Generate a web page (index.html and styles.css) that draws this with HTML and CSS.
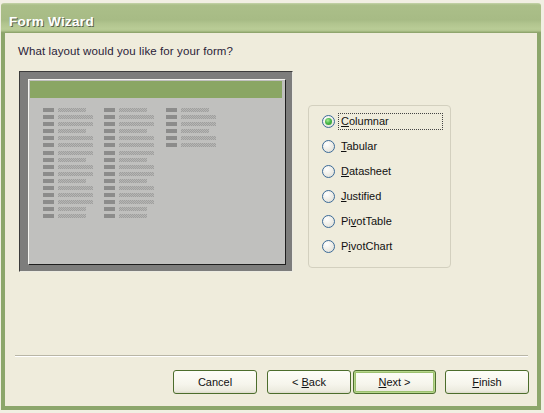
FILE: index.html
```html
<!DOCTYPE html>
<html>
<head>
<meta charset="utf-8">
<link rel="stylesheet" href="styles.css">
</head>
<body>
<div class="window">
  <div class="titlebar"><span class="title">Form Wizard</span></div>
  <div class="frame">
    <div class="question">What layout would you like for your form?</div>
    <div class="main">
      <div class="preview">
        <div class="panel">
          <div class="header"></div>
          <div class="cols">
            <div class="col">
              <div class="r"><i class="k"></i><i class="v s"></i></div>
              <div class="r"><i class="k"></i><i class="v"></i></div>
              <div class="r"><i class="k"></i><i class="v"></i></div>
              <div class="r"><i class="k"></i><i class="v s"></i></div>
              <div class="r"><i class="k"></i><i class="v"></i></div>
              <div class="r"><i class="k"></i><i class="v"></i></div>
              <div class="r"><i class="k"></i><i class="v"></i></div>
              <div class="r"><i class="k"></i><i class="v s"></i></div>
              <div class="r"><i class="k"></i><i class="v"></i></div>
              <div class="r"><i class="k"></i><i class="v"></i></div>
              <div class="r"><i class="k"></i><i class="v s"></i></div>
              <div class="r"><i class="k"></i><i class="v"></i></div>
              <div class="r"><i class="k"></i><i class="v"></i></div>
              <div class="r"><i class="k"></i><i class="v"></i></div>
              <div class="r"><i class="k"></i><i class="v s"></i></div>
              <div class="r"><i class="k"></i><i class="v s"></i></div>
            </div>
            <div class="col">
              <div class="r"><i class="k"></i><i class="v s"></i></div>
              <div class="r"><i class="k"></i><i class="v"></i></div>
              <div class="r"><i class="k"></i><i class="v"></i></div>
              <div class="r"><i class="k"></i><i class="v s"></i></div>
              <div class="r"><i class="k"></i><i class="v"></i></div>
              <div class="r"><i class="k"></i><i class="v"></i></div>
              <div class="r"><i class="k"></i><i class="v"></i></div>
              <div class="r"><i class="k"></i><i class="v s"></i></div>
              <div class="r"><i class="k"></i><i class="v"></i></div>
              <div class="r"><i class="k"></i><i class="v"></i></div>
              <div class="r"><i class="k"></i><i class="v s"></i></div>
              <div class="r"><i class="k"></i><i class="v"></i></div>
              <div class="r"><i class="k"></i><i class="v"></i></div>
              <div class="r"><i class="k"></i><i class="v"></i></div>
              <div class="r"><i class="k"></i><i class="v s"></i></div>
              <div class="r"><i class="k"></i><i class="v s"></i></div>
            </div>
            <div class="col">
              <div class="r"><i class="k"></i><i class="v s"></i></div>
              <div class="r"><i class="k"></i><i class="v"></i></div>
              <div class="r"><i class="k"></i><i class="v"></i></div>
              <div class="r"><i class="k"></i><i class="v s"></i></div>
              <div class="r"><i class="k"></i><i class="v"></i></div>
              <div class="r"><i class="k"></i><i class="v"></i></div>
            </div>
          </div>
        </div>
      </div>
      <div class="group">
        <div class="opt"><span class="radio checked"></span><span class="lbl focus"><u>C</u>olumnar</span></div>
        <div class="opt"><span class="radio"></span><span class="lbl"><u>T</u>abular</span></div>
        <div class="opt"><span class="radio"></span><span class="lbl"><u>D</u>atasheet</span></div>
        <div class="opt"><span class="radio"></span><span class="lbl"><u>J</u>ustified</span></div>
        <div class="opt"><span class="radio"></span><span class="lbl">Pi<u>v</u>otTable</span></div>
        <div class="opt"><span class="radio"></span><span class="lbl">P<u>i</u>votChart</span></div>
      </div>
    </div>
    <div class="sep"></div>
    <div class="buttons">
      <div class="btn cancel"><span>Cancel</span></div>
      <div class="btn back"><span>&lt;&nbsp;<u>B</u>ack</span></div>
      <div class="btn next default"><span><u>N</u>ext &gt;</span></div>
      <div class="btn finish"><span><u>F</u>inish</span></div>
    </div>
  </div>
</div>
</body>
</html>
```

FILE: styles.css
```css
* { box-sizing: border-box; }
html, body { margin: 0; padding: 0; }
body {
  background: #f1efe3;
  width: 544px;
  height: 413px;
  overflow: hidden;
  font-family: "Liberation Sans", Arial, sans-serif;
  font-size: 11px;
}
.window {
  margin: 3px 0 0 1px;
  width: 540px;
  height: 407px;
  display: flex;
  flex-direction: column;
}
.titlebar {
  height: 30px;
  border-radius: 3px 3px 0 0;
  background: linear-gradient(to bottom, #c6d4aa 0, #abbf89 2px, #a7bb85 17px, #b2c58f 21px, #b9cc96 26px, #b0c48d 28px, #94aa72 29px, #8aa168 30px);
  display: flex;
  align-items: center;
  padding-left: 8px;
}
.title {
  color: #ffffff;
  font-weight: bold;
  font-size: 13.5px;
  letter-spacing: 0.3px;
  text-shadow: 1px 1px 0 #5b6450;
  margin-top: 6px;
}
.frame {
  height: 377px;
  border: 4px solid #8ca66b;
  border-top: none;
  background: #efecdc;
  display: flex;
  flex-direction: column;
}
.question {
  margin: 11px 0 0 13px;
  line-height: 14px;
  font-size: 11.5px;
  letter-spacing: 0.1px;
  color: #2a2238;
}
.main {
  display: flex;
  margin: 13px 0 0 14px;
  align-items: flex-start;
}
.preview {
  width: 274px;
  height: 201px;
  background: #7d7d7c;
  border: 1px solid;
  border-color: #3c3c3c #ecebe2 #ecebe2 #3c3c3c;
  padding: 7px 6px 6px 8px;
}
.panel {
  width: 258px;
  height: 186px;
  background: #c0c0be;
  border: 1px solid;
  border-color: #f4f4f0 #1e1e1e #1e1e1e #f4f4f0;
}
.header {
  margin: 1px 3px 0 1px;
  height: 17px;
  background: #8aa664;
}
.cols {
  margin-top: 10px;
  padding-left: 14px;
  display: grid;
  grid-template-columns: 61px 62px 60px;
}
.col { display: flex; flex-direction: column; }
.r {
  height: 7.1px;
  display: flex;
  align-items: flex-start;
}
.k {
  display: block;
  width: 11px;
  height: 4px;
  background: #8c8c8b;
}
.v {
  display: block;
  width: 35px;
  height: 4px;
  margin-left: 4px;
  background-color: #aaaaa9;
  background-image: repeating-conic-gradient(#9f9f9e 0 25%, #b6b6b4 0 50%);
  background-size: 2px 2px;
}
.v.s { width: 28px; }
.group {
  margin: 34px 0 0 15px;
  width: 143px;
  height: 163px;
  border: 1px solid #d3d0bf;
  border-radius: 4px;
  padding: 7px 0 0 13px;
}
.opt {
  height: 17px;
  margin-bottom: 8px;
  display: flex;
  align-items: center;
}
.radio {
  width: 13px;
  height: 13px;
  border-radius: 50%;
  border: 1px solid #3a6a98;
  background: radial-gradient(circle at 35% 30%, #ffffff 0, #f4f3ee 35%, #dcdbd2 100%);
  display: flex;
  align-items: center;
  justify-content: center;
  flex: none;
}
.radio.checked::after {
  content: "";
  width: 7px;
  height: 7px;
  border-radius: 50%;
  background: radial-gradient(circle at 40% 35%, #a8ec98 0, #4cb84a 45%, #23922a 100%);
}
.lbl {
  margin-left: 3px;
  padding-left: 3px;
  line-height: 17px;
  height: 17px;
  color: #111;
}
.focus {
  width: 105px;
  outline: 1px dotted #444;
  outline-offset: -1px;
}
.sep {
  margin: 83px 0 0 10px;
  width: 513px;
  height: 2px;
  border-top: 1px solid #b9b6a6;
  border-bottom: 1px solid #ffffff;
}
.buttons {
  margin-top: 13px;
  display: flex;
  justify-content: flex-end;
  padding-right: 8px;
}
.btn {
  width: 84px;
  height: 24px;
  border: 1px solid #4c6d2c;
  border-radius: 3px;
  background: linear-gradient(to bottom, #fdfdf8 0, #f6f5ec 60%, #ecebdf 90%, #dcdacb 100%);
  display: flex;
  align-items: center;
  justify-content: center;
  color: #111;
  font-size: 11px;
  white-space: pre;
}
.cancel { margin-right: 10px; }
.back { margin-right: 2px; }
.next { width: 83px; margin-right: 9px; }
.default {
  box-shadow: inset 0 0 0 1px #b7d68c, inset 0 0 0 2px #9cc06f;
}
```
